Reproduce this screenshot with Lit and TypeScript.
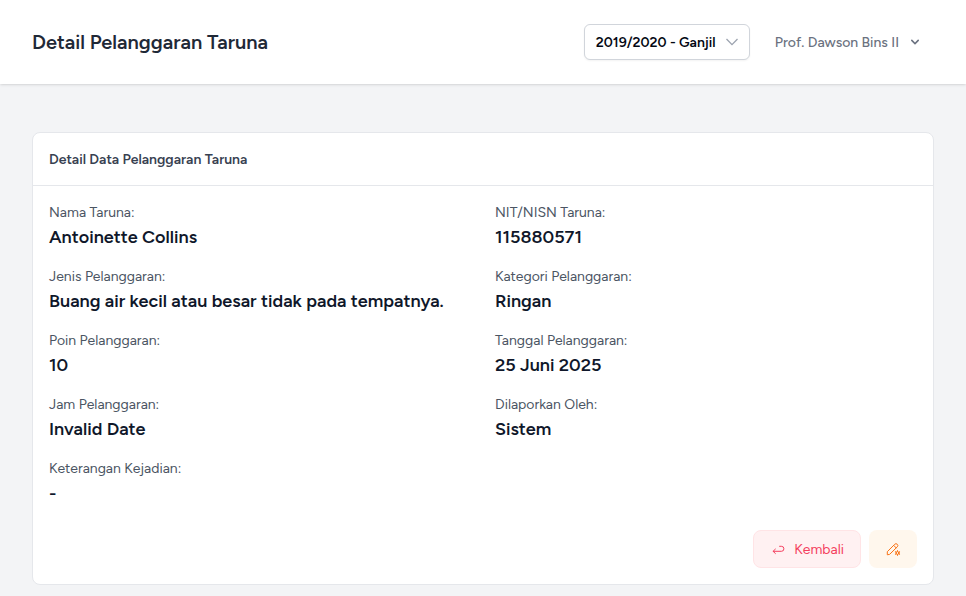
import { LitElement, html, css, svg } from "lit";
import { customElement } from "lit/decorators.js";

interface Field {
  label: string;
  value: string;
}

const FIELDS: Field[] = [
  { label: "Nama Taruna:", value: "Antoinette Collins" },
  { label: "NIT/NISN Taruna:", value: "115880571" },
  { label: "Jenis Pelanggaran:", value: "Buang air kecil atau besar tidak pada tempatnya." },
  { label: "Kategori Pelanggaran:", value: "Ringan" },
  { label: "Poin Pelanggaran:", value: "10" },
  { label: "Tanggal Pelanggaran:", value: "25 Juni 2025" },
  { label: "Jam Pelanggaran:", value: "Invalid Date" },
  { label: "Dilaporkan Oleh:", value: "Sistem" },
  { label: "Keterangan Kejadian:", value: "-" },
];

const GEAR_TEETH = [0, 60, 120, 180, 240, 300];

@customElement("app-root")
export class AppRoot extends LitElement {
  static styles = css`
    :host {
      display: block;
      min-height: 100vh;
      background: #f3f4f6;
      font: 400 14px/20px Figtree, Inter, sans-serif;
      color: #0f172a;
    }
    * {
      box-sizing: border-box;
    }
    svg {
      display: block;
      flex: none;
    }
    header {
      display: flex;
      align-items: center;
      height: 84px;
      padding: 0 32px;
      background: #fff;
      box-shadow: 0 1px 3px rgba(0, 0, 0, 0.1), 0 1px 2px -1px rgba(0, 0, 0, 0.1);
    }
    h1 {
      flex: 1;
      margin: 0;
      font-size: 20px;
      line-height: 25px;
      font-weight: 600;
      color: #1f2937;
    }
    button {
      font: inherit;
      display: flex;
      align-items: center;
      margin: 0;
      cursor: pointer;
    }
    button span {
      padding-top: 2px;
    }
    .period {
      width: 166px;
      height: 36px;
      padding: 0 11px;
      justify-content: space-between;
      border: 1px solid #d1d5db;
      border-radius: 6px;
      background: #fff;
      color: #030712;
      font-weight: 600;
      box-shadow: 0 1px 2px rgba(0, 0, 0, 0.05);
    }
    .account {
      gap: 8px;
      margin: 0 11px 0 25px;
      padding: 0;
      border: 0;
      background: none;
      color: #6b7280;
      font-weight: 500;
    }
    main {
      padding: 48px 32px 11px;
    }
    .card {
      border: 1px solid #e5e7eb;
      border-radius: 8px;
      background: #fff;
    }
    h2 {
      margin: 0;
      padding: 17px 16px 15px;
      border-bottom: 1px solid #e5e7eb;
      font-size: 14px;
      line-height: 20px;
      font-weight: 600;
      color: #374151;
    }
    .body {
      padding: 17px 16px 16px;
    }
    dl {
      display: grid;
      grid-template-columns: 1fr 1fr;
      gap: 16px 24px;
      margin: 0;
    }
    dt {
      color: #4b5563;
    }
    dd {
      margin: 0;
      font-size: 18px;
      line-height: 28px;
      font-weight: 600;
      color: #0f172a;
    }
    .actions {
      display: flex;
      justify-content: flex-end;
      gap: 8px;
      margin-top: 23px;
    }
    .back,
    .edit {
      gap: 8px;
      height: 38px;
      padding: 0 16px;
      border-radius: 8px;
    }
    .back {
      border: 1px solid #ffe4e6;
      background: #fff1f2;
      color: #f43f5e;
    }
    .edit {
      width: 48px;
      border: 0;
      background: #fff7ed;
      color: #f97316;
    }
  `;

  render() {
    return html`
      <header>
        <h1>Detail Pelanggaran Taruna</h1>
        <button class="period">
          <span>2019/2020 - Ganjil</span>
          <svg width="12" height="12" viewBox="0 0 12 12" fill="none" stroke="#9ca3af" stroke-width="1.3">
            <path d="M0.5 3L6 8.6L11.5 3" />
          </svg>
        </button>
        <button class="account">
          <span>Prof. Dawson Bins II</span>
          <svg width="16" height="16" viewBox="0 0 20 20" fill="currentColor">
            <path
              fill-rule="evenodd"
              d="M5.293 7.293a1 1 0 011.414 0L10 10.586l3.293-3.293a1 1 0 111.414 1.414l-4 4a1 1 0 01-1.414 0l-4-4a1 1 0 010-1.414z"
            />
          </svg>
        </button>
      </header>
      <main>
        <section class="card">
          <h2>Detail Data Pelanggaran Taruna</h2>
          <div class="body">
            <dl>
              ${FIELDS.map((f) => html`<div><dt>${f.label}</dt><dd>${f.value}</dd></div>`)}
            </dl>
            <div class="actions">
              <button class="back">
                <svg width="16" height="16" viewBox="0 0 16 16" fill="none" stroke="currentColor"
                  stroke-width="1" stroke-linecap="round" stroke-linejoin="round">
                  <path d="M3.2 10.3H11.4a2.5 2.5 0 0 0 0-5H9.6" />
                  <path d="M5.4 8.1L3.1 10.3L5.4 12.5" />
                </svg>
                <span>Kembali</span>
              </button>
              <button class="edit" aria-label="Edit">
                <svg width="16" height="16" viewBox="0 0 16 16" fill="none" stroke="currentColor"
                  stroke-width="1" stroke-linecap="round" stroke-linejoin="round">
                  <path d="M2.3 13.4V10.7L9.7 3.3a1.75 1.75 0 0 1 2.6 2.5L4.9 13.1Z" />
                  <path d="M8.7 4.4L11.2 6.9" />
                  <circle cx="12.5" cy="12" r="1.4" />
                  ${GEAR_TEETH.map(
                    (a) => svg`<path d="M12.5 10.4V9.6" transform=${`rotate(${a} 12.5 12)`} />`
                  )}
                </svg>
              </button>
            </div>
          </div>
        </section>
      </main>
    `;
  }
}
